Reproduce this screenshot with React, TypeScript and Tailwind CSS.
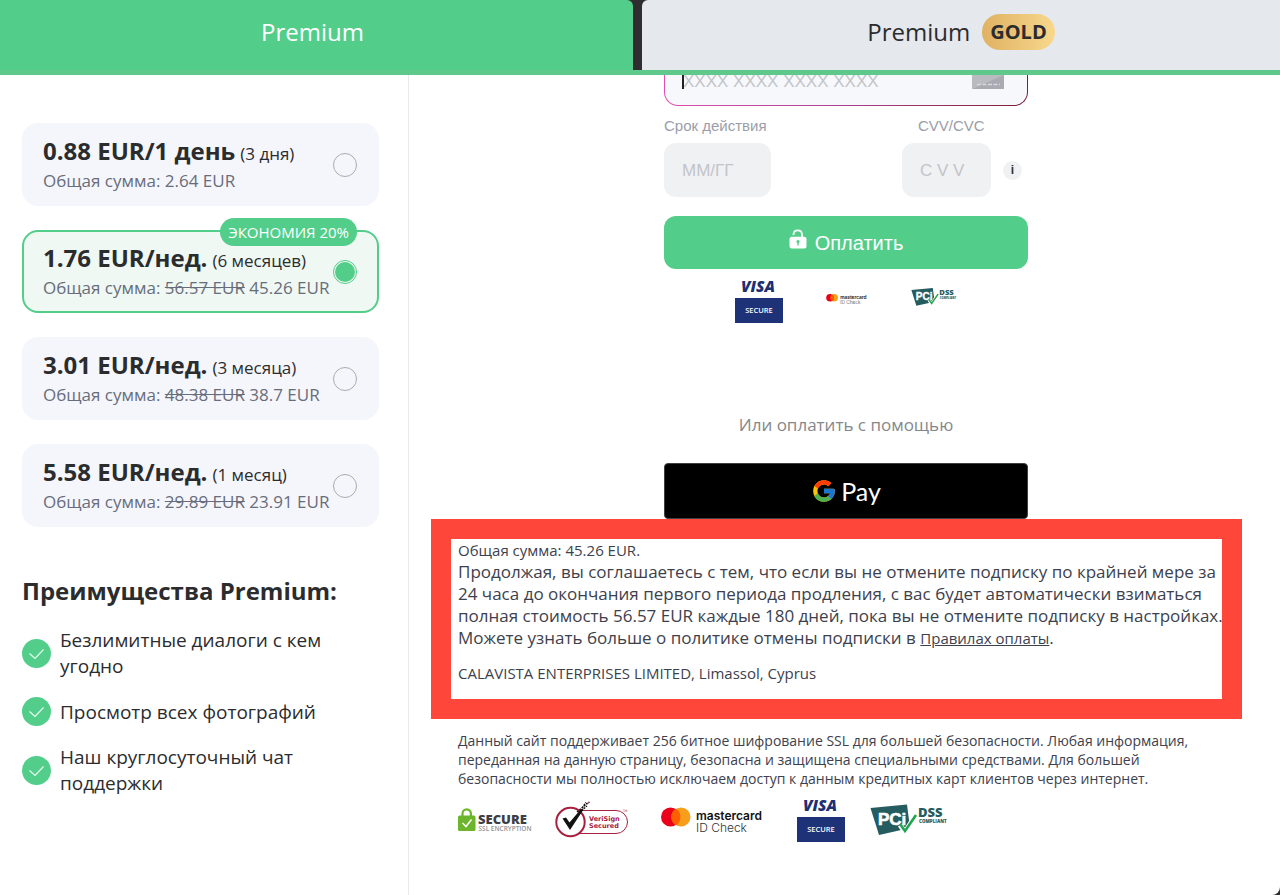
import React, { useState } from 'react';
import { FcGoogle } from 'react-icons/fc';

interface Plan {
  id: string;
  price: string;
  period: string;
  oldTotal?: string;
  total: string;
  badge?: string;
}

const plans: Plan[] = [
  { id: 'trial', price: '0.88 EUR/1 день', period: '(3 дня)', total: '2.64 EUR' },
  { id: 'half', price: '1.76 EUR/нед.', period: '(6 месяцев)', oldTotal: '56.57 EUR', total: '45.26 EUR', badge: 'ЭКОНОМИЯ 20%' },
  { id: 'quarter', price: '3.01 EUR/нед.', period: '(3 месяца)', oldTotal: '48.38 EUR', total: '38.7 EUR' },
  { id: 'month', price: '5.58 EUR/нед.', period: '(1 месяц)', oldTotal: '29.89 EUR', total: '23.91 EUR' },
];

const benefits = ['Безлимитные диалоги с кем угодно', 'Просмотр всех фотографий', 'Наш круглосуточный чат поддержки'];

const VisaSecure: React.FC = () => (
  <svg viewBox="0 0 48 44" className="w-12 h-11 shrink-0 overflow-visible" role="img" aria-label="Visa Secure">
    <text x="6" y="12.500" fontFamily="Open Sans, sans-serif" fontSize="15.500" fontWeight="800" fontStyle="italic" fill="#1d2f73">VISA</text>
    <rect y="19" width="48" height="25" fill="#1e3278" />
    <text x="24" y="34" textAnchor="middle" fontFamily="Open Sans, sans-serif" fontSize="7.500" fontWeight="600" fill="#fff">SECURE</text>
  </svg>
);

const Mastercard: React.FC<{ className: string }> = ({ className }) => (
  <svg viewBox="0 0 104 30" className={className} role="img" aria-label="Mastercard ID Check">
    <circle cx="20" cy="12" r="9.5" fill="#f79e1b" />
    <circle cx="9.5" cy="12" r="9.5" fill="#eb001b" />
    <path d="M14.75 3.8a9.5 9.5 0 0 1 0 16.4a9.5 9.5 0 0 1 0-16.4z" fill="#ff5f00" />
    <text x="35" y="15" fontFamily="Inter, sans-serif" fontSize="12" fontWeight="600" fill="#111">mastercard</text>
    <text x="35" y="27" fontFamily="Inter, sans-serif" fontSize="12" fontWeight="300" fill="#333">ID Check</text>
  </svg>
);

const PciDss: React.FC<{ className: string }> = ({ className }) => (
  <svg viewBox="0 0 78 34" className={className} role="img" aria-label="PCI DSS Compliant">
    <path d="M0.5 5L37 1.500L40 25L9 32z" fill="#245c5f" />
    <text x="8" y="22" fontFamily="Liberation Sans, sans-serif" fontSize="17" fontWeight="700" fill="#fff" stroke="#fff" strokeWidth="0.600">PCi</text>
    <path d="M30 22L35 29L45 13" fill="none" stroke="#fff" strokeWidth="5" />
    <path d="M30 21L35 28L46 12" fill="none" stroke="#22a551" strokeWidth="2.600" />
    <text x="48" y="14" fontFamily="Open Sans, sans-serif" fontSize="13" fontWeight="800" fill="#245c5f">DSS</text>
    <text x="49" y="20" fontFamily="Open Sans, sans-serif" fontSize="4.500" fontWeight="800" fill="#245c5f">COMPLIANT</text>
  </svg>
);

const SslSecure: React.FC = () => (
  <svg viewBox="0 0 74 26" className="w-[74px] h-[26px] shrink-0" role="img" aria-label="Secure SSL Encryption">
    <path d="M4.500 10V6.500a4.200 4.200 0 0 1 8.400 0V10" fill="none" stroke="#6cb52d" strokeWidth="2.200" />
    <rect y="8.500" width="17.500" height="15.500" rx="1.500" fill="#6cb52d" />
    <path d="M4.500 16L8 19.500L13.500 12.500" fill="none" stroke="#fff" strokeWidth="1.500" />
    <text x="20" y="17" fontFamily="Open Sans, sans-serif" fontSize="13" fontWeight="800" fill="#3c3f46">SECURE</text>
    <text x="20.500" y="23.500" fontFamily="Open Sans, sans-serif" fontSize="6.500" fontWeight="600" fill="#8f9399">SSL ENCRYPTION</text>
  </svg>
);

const VeriSign: React.FC = () => (
  <svg viewBox="0 0 74 38" className="w-[74px] h-[38px] shrink-0" role="img" aria-label="VeriSign Secured">
    <rect x="10" y="9.500" width="62.500" height="23" rx="11.500" fill="#fff" stroke="#a8203f" strokeWidth="1" />
    <circle cx="15.500" cy="21" r="14.200" fill="#fff" stroke="#a8203f" strokeWidth="2" />
    <path d="M7.500 17.500L11 16.500L14.500 21.500L26 8L28.500 8.500L15 29z" fill="#111" />
    <path d="M22 11L34 1M24 11.500L32 5M27 7L31 1.500" fill="none" stroke="#111" strokeWidth="1.400" strokeDasharray="2 1" />
    <path d="M32 3L35 1" stroke="#a8203f" strokeWidth="1" />
    <text x="34" y="20" fontFamily="DejaVu Sans, sans-serif" fontSize="6.500" fontWeight="700" fill="#a8203f">VeriSign</text>
    <text x="34" y="27" fontFamily="DejaVu Sans, sans-serif" fontSize="6.500" fontWeight="700" fill="#a8203f">Secured</text>
    <text x="68" y="11" fontFamily="DejaVu Sans, sans-serif" fontSize="3" fill="#a8203f">TM</text>
  </svg>
);

const PlanCard: React.FC<{ plan: Plan; selected: boolean; onSelect: () => void }> = ({ plan, selected, onSelect }) => (
  <label
    className={`relative flex items-center rounded-2xl border-2 pl-[19px] pr-5 py-2.5 cursor-pointer ${
      selected ? 'border-[#53ce8a] bg-[#eff8f3]' : 'border-[#f5f6fb] bg-[#f5f6fb]'
    }`}
  >
    {plan.badge && (
      <span className="absolute right-5 -top-[14px] rounded-full bg-[#53ce8a] px-2 text-[15px] leading-7 text-white">{plan.badge}</span>
    )}
    <span className="whitespace-nowrap">
      <span className="flex h-8 items-baseline gap-[5px] leading-8">
        <b className="text-2xl leading-8">{plan.price}</b>
        <span className="text-[17px] leading-6">{plan.period}</span>
      </span>
      <span className="block text-[17px] leading-[27px] text-[#686d7b]">
        Общая сумма: {plan.oldTotal && <><s>{plan.oldTotal}</s> </>}{plan.total}
      </span>
    </span>
    <input
      type="radio"
      name="plan"
      checked={selected}
      onChange={onSelect}
      className="absolute right-5 size-6 appearance-none rounded-full border border-[#a9abb2] p-px bg-clip-content checked:border-[#53ce8a] checked:bg-[#53ce8a]"
    />
  </label>
);

export default function App() {
  const [selected, setSelected] = useState('half');
  const [gold, setGold] = useState(false);

  return (
    <div className="bg-[#302d30] font-['Open_Sans',sans-serif] text-[#2b2c2e]">
      <div className="flex min-h-screen flex-col rounded-br-lg bg-white">
        {/* Tabs */}
        <header className="relative z-10 grid grid-cols-[633fr_638fr] gap-[9px] border-b-[5px] border-[#5fc98b] bg-[#302d30] text-2xl">
          <button onClick={() => setGold(false)} aria-pressed={!gold} className="h-[70px] rounded-tr-md bg-[#53ce8a] pb-1.5 pr-2 text-white">
            Premium
          </button>
          <button onClick={() => setGold(true)} aria-pressed={gold} className="flex h-[70px] items-center justify-center gap-3 rounded-tl-md bg-[#e5e8ed] pb-1.5">
            Premium
            <span className="rounded-full bg-linear-to-r from-[#dfb163] to-[#f8d88c] px-2 text-xl font-bold leading-9">GOLD</span>
          </button>
        </header>

        <div className="flex flex-1">
          {/* Plans */}
          <aside className="w-[409px] shrink-0 border-r border-[#e8e9ec] pl-[22px] pr-[29px] pt-12">
            <div className="flex flex-col gap-6">
              {plans.map((plan) => (
                <PlanCard key={plan.id} plan={plan} selected={selected === plan.id} onSelect={() => setSelected(plan.id)} />
              ))}
            </div>

            <h2 className="mt-12 whitespace-nowrap text-2xl font-bold leading-8">Преимущества Premium:</h2>
            <ul className="mt-5 flex flex-col gap-[18px] text-[19px] leading-[26px]">
              {benefits.map((item) => (
                <li key={item} className="flex items-center gap-[9px]">
                  <svg viewBox="0 0 29 29" className="size-[29px] shrink-0">
                    <circle cx="14.500" cy="14.500" r="14.500" fill="#53ce8a" />
                    <path d="M7.500 14.500L13 19.500L21.500 10.500" fill="none" stroke="#e5fbef" strokeWidth="1.200" />
                  </svg>
                  {item}
                </li>
              ))}
            </ul>
          </aside>

          {/* Payment */}
          <main className="min-w-0 flex-1 pl-[22px] pr-[38px] pb-12">
            <div className="pl-[19px]">
              <form className="mx-auto -mt-[22px] w-[364px] font-['Liberation_Sans',sans-serif]" onSubmit={(e) => e.preventDefault()}>
                <div className="relative rounded-[14px] bg-linear-to-r from-[#e04fb0] via-[#a8418f] to-[#7d1f33] p-px">
                  <input
                    aria-label="Номер карты"
                    placeholder="XXXX XXXX XXXX XXXX"
                    className="block h-[51px] w-full rounded-[13px] bg-[#f7f8fc] px-[18px] pt-1 text-[17px] outline-none placeholder:text-[#c3c4c8]"
                  />
                  <span className="absolute left-[18px] top-4 h-5 w-0.5 bg-[#222]" />
                  <svg viewBox="0 0 32 22" className="absolute bottom-[17px] right-6 h-[22px] w-8">
                    <rect width="32" height="22" rx="1" fill="#b9bbc1" />
                    <path d="M0 22L32 8V22z" fill="#a9abb2" />
                    <rect x="5" y="4" width="6" height="4" fill="#d6d8dc" />
                    <path d="M5 17.500H28" stroke="#d6d8dc" strokeWidth="1.500" strokeDasharray="4 1.500" />
                  </svg>
                </div>

                <div className="mt-2.5 flex justify-between text-[15px] text-[#9a9ea8]">
                  <div>
                    <label htmlFor="expiry" className="block leading-5">Срок действия</label>
                    <input
                      id="expiry"
                      placeholder="ММ/ГГ"
                      className="mt-[7px] block h-[54px] w-[107px] rounded-xl bg-[#f0f1f3] px-[18px] pt-0.5 text-[17px] outline-none placeholder:text-[#c3c4c8]"
                    />
                  </div>
                  <div className="pr-1.5">
                    <label htmlFor="cvv" className="block pl-4 leading-5">CVV/CVC</label>
                    <div className="mt-[7px] flex items-center gap-3">
                      <input
                        id="cvv"
                        placeholder="C V V"
                        className="block h-[54px] w-[89px] rounded-xl bg-[#f0f1f3] px-[18px] pt-0.5 text-[17px] outline-none placeholder:text-[#c3c4c8]"
                      />
                      <button type="button" className="size-[19px] rounded-full bg-[#f0f1f3] text-xs font-bold leading-[19px] text-[#333]">i</button>
                    </div>
                  </div>
                </div>

                <button className="mt-[19px] flex h-[53px] w-full items-center justify-center gap-2 rounded-xl bg-[#53ce8a] text-xl text-white">
                  <svg viewBox="0 0 18 20" className="mb-2 h-5 w-[18px]">
                    <path d="M4.500 6V5A4.300 4.300 0 0 1 13 5V8.500" fill="none" stroke="#fff" strokeWidth="1.800" />
                    <rect x="0.500" y="7.800" width="17" height="11.700" rx="2.500" fill="#fff" />
                    <circle cx="9" cy="12.500" r="1.600" fill="#53ce8a" />
                    <path d="M9 13V16.500" stroke="#53ce8a" strokeWidth="1.400" />
                  </svg>
                  Оплатить
                </button>

                <div className="mt-2.5 flex h-11 items-center justify-center gap-[43px]">
                  <VisaSecure />
                  <Mastercard className="mb-1 h-3 w-[42px] shrink-0" />
                  <PciDss className="mb-2 h-5 w-[46px] shrink-0" />
                </div>

                <p className="mt-[90px] text-center font-['Open_Sans',sans-serif] text-[17px] leading-6 text-[#86878b]">Или оплатить с помощью</p>

                <button type="button" aria-label="Google Pay" className="mt-[26px] flex h-14 w-full items-center justify-center gap-1 rounded border border-[#3c4043] bg-black text-white">
                  <FcGoogle size={26} />
                  <span className="font-[Lato,sans-serif] text-[25px] leading-8">Pay</span>
                </button>
              </form>
            </div>

            <section className="border-[20px] border-[#ff463a] pl-[7px] text-[15px] leading-[22px] text-[#3d414d]">
              <p>Общая сумма: 45.26 EUR.</p>
              <p className="-mr-1 text-[17px]">
                Продолжая, вы соглашаетесь с тем, что если вы не отмените подписку по крайней мере за 24 часа до окончания первого
                периода продления, с вас будет автоматически взиматься полная стоимость 56.57 EUR каждые 180 дней, пока вы не отмените
                подписку в настройках. Можете узнать больше о политике отмены подписки в{' '}
                <a href="#rules" className="text-[15px] underline">Правилах оплаты</a>.
              </p>
              <p className="pb-[15px] pt-[13px]">CALAVISTA ENTERPRISES LIMITED, Limassol, Cyprus</p>
            </section>

            <p className="mt-3 pl-[27px] pr-5 text-sm leading-[19px] text-[#3d414d]">
              Данный сайт поддерживает 256 битное шифрование SSL для большей безопасности. Любая информация, переданная на данную
              страницу, безопасна и защищена специальными средствами. Для большей безопасности мы полностью исключаем доступ к данным
              кредитных карт клиентов через интернет.
            </p>
            <div className="mt-2.5 flex items-center pl-[27px]">
              <SslSecure />
              <span className="ml-[23px]"><VeriSign /></span>
              <Mastercard className="ml-8 h-[30px] w-[104px] shrink-0" />
              <span className="ml-8"><VisaSecure /></span>
              <PciDss className="ml-[25px] h-[34px] w-[78px] shrink-0" />
            </div>
          </main>
        </div>
      </div>
    </div>
  );
}
